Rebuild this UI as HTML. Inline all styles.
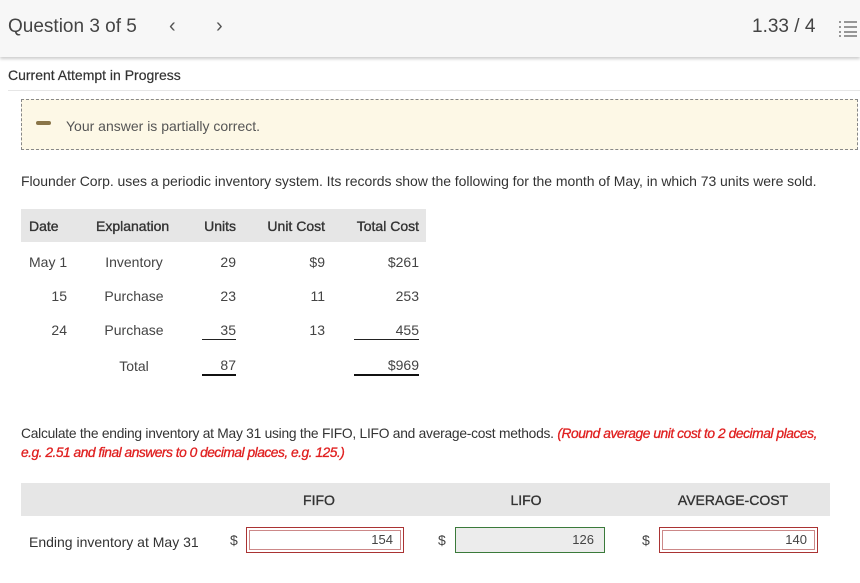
<!DOCTYPE html>
<html><head><style>
body{margin:0;width:860px;height:583px;background:#fff;font-family:"Liberation Sans",sans-serif;color:#333;position:relative;overflow:hidden}
.a{position:absolute;white-space:nowrap}
.hdr{position:absolute;left:0;top:0;width:860px;height:57px;background:#f7f7f7;box-shadow:0 2px 3px rgba(0,0,0,.2)}
.r{text-align:right}
.c{text-align:center}
.t{font-size:14px;color:#444}
.th{font-size:14px;color:#333;-webkit-text-stroke:0.35px #333}
.box{position:absolute;height:26px;box-sizing:border-box;font-size:13px;color:#444;text-align:right;padding-right:10px;line-height:24px}
</style></head><body>
<div class="hdr"></div>
<div class="a" style="left:8px;top:16px;font-size:19px;color:#444">Question 3 of 5</div>
<div class="a" style="left:169px;top:15px;font-size:20px;color:#555">&#8249;</div>
<div class="a" style="left:216px;top:15px;font-size:20px;color:#555">&#8250;</div>
<div class="a" style="left:752px;top:16px;font-size:19px;color:#444">1.33 / 4</div>
<svg class="a" style="left:838px;top:20px" width="20" height="18" viewBox="0 0 20 18" stroke="#777" stroke-width="1.5" fill="none"><path d="M6 2H19M6 7H19M6 12H19M6 16H19M1 2H3M1 7H3M1 12H3M1 16H3"/></svg>
<div class="a" style="left:8px;top:67px;font-size:14px;color:#333;-webkit-text-stroke:0.2px #333">Current Attempt in Progress</div>
<div class="a" style="left:8px;top:90px;width:852px;height:1px;background:#e6e6e6"></div>
<div class="a" style="left:21px;top:99px;width:835px;height:49px;background:#fdf8e6;border:1px dashed #888"></div>
<div class="a" style="left:36px;top:121px;width:15px;height:4px;background:#8a7548;border-radius:2px"></div>
<div class="a" style="left:66px;top:118px;font-size:14px;color:#555">Your answer is partially correct.</div>
<div class="a" style="left:21px;top:173px;font-size:14px;color:#333;letter-spacing:-0.05px">Flounder Corp. uses a periodic inventory system. Its records show the following for the month of May, in which 73 units were sold.</div>
<div class="a" style="left:21px;top:209px;width:405px;height:33px;background:#e6e6e6"></div>
<div class="a th" style="left:29px;top:218px">Date</div>
<div class="a th" style="left:96px;top:218px">Explanation</div>
<div class="a th r" style="left:176px;top:218px;width:60px">Units</div>
<div class="a th r" style="left:245px;top:218px;width:80px">Unit Cost</div>
<div class="a th r" style="left:339px;top:218px;width:80px">Total Cost</div>

<div class="a t" style="left:29px;top:254px">May 1</div>
<div class="a t c" style="left:94px;top:254px;width:80px">Inventory</div>
<div class="a t r" style="left:176px;top:254px;width:60px">29</div>
<div class="a t r" style="left:245px;top:254px;width:80px">$9</div>
<div class="a t r" style="left:339px;top:254px;width:80px">$261</div>

<div class="a t r" style="left:29px;top:288px;width:38px">15</div>
<div class="a t c" style="left:94px;top:288px;width:80px">Purchase</div>
<div class="a t r" style="left:176px;top:288px;width:60px">23</div>
<div class="a t r" style="left:245px;top:288px;width:80px">11</div>
<div class="a t r" style="left:339px;top:288px;width:80px">253</div>

<div class="a t r" style="left:29px;top:322px;width:38px">24</div>
<div class="a t c" style="left:94px;top:322px;width:80px">Purchase</div>
<div class="a t r" style="left:176px;top:322px;width:60px">35</div>
<div class="a t r" style="left:245px;top:322px;width:80px">13</div>
<div class="a t r" style="left:339px;top:322px;width:80px">455</div>
<div class="a" style="left:202px;top:339px;width:34px;height:1px;background:#222"></div>
<div class="a" style="left:354px;top:339px;width:65px;height:1px;background:#222"></div>

<div class="a t c" style="left:94px;top:358px;width:80px">Total</div>
<div class="a t r" style="left:176px;top:357px;width:60px">87</div>
<div class="a t r" style="left:339px;top:357px;width:80px">$969</div>
<div class="a" style="left:202px;top:374px;width:34px;height:2px;background:#111"></div>
<div class="a" style="left:354px;top:374px;width:65px;height:2px;background:#111"></div>

<div class="a" style="left:21px;top:426px;font-size:13.8px;color:#333;letter-spacing:-0.25px">Calculate the ending inventory at May 31 using the FIFO, LIFO and average-cost methods. <i style="color:#e02020;-webkit-text-stroke:0.3px #e02020;letter-spacing:-0.45px">(Round average unit cost to 2 decimal places,</i></div>
<div class="a" style="left:21px;top:445px;font-size:13.8px;color:#e02020;font-style:italic;letter-spacing:-0.5px;-webkit-text-stroke:0.3px #e02020">e.g. 2.51 and final answers to 0 decimal places, e.g. 125.)</div>

<div class="a" style="left:21px;top:483px;width:809px;height:33px;background:#e6e6e6"></div>
<div class="a th c" style="left:269px;top:492px;width:100px">FIFO</div>
<div class="a th c" style="left:476px;top:492px;width:100px">LIFO</div>
<div class="a th c" style="left:673px;top:492px;width:120px">AVERAGE-COST</div>

<div class="a t" style="left:29px;top:534px;color:#333">Ending inventory at May 31</div>
<div class="a t" style="left:230px;top:532px">$</div>
<div class="box" style="left:246px;top:527px;width:158px;border:1px solid #a33;box-shadow:inset 0 0 0 2px #fff,inset 0 0 0 3px #c88">154</div>
<div class="a t" style="left:438px;top:532px">$</div>
<div class="box" style="left:455px;top:527px;width:150px;border:1px solid #3a7a3a;background:#ececec">126</div>
<div class="a t" style="left:642px;top:532px">$</div>
<div class="box" style="left:659px;top:527px;width:159px;border:1px solid #a33;box-shadow:inset 0 0 0 2px #fff,inset 0 0 0 3px #c88">140</div>
</body></html>
